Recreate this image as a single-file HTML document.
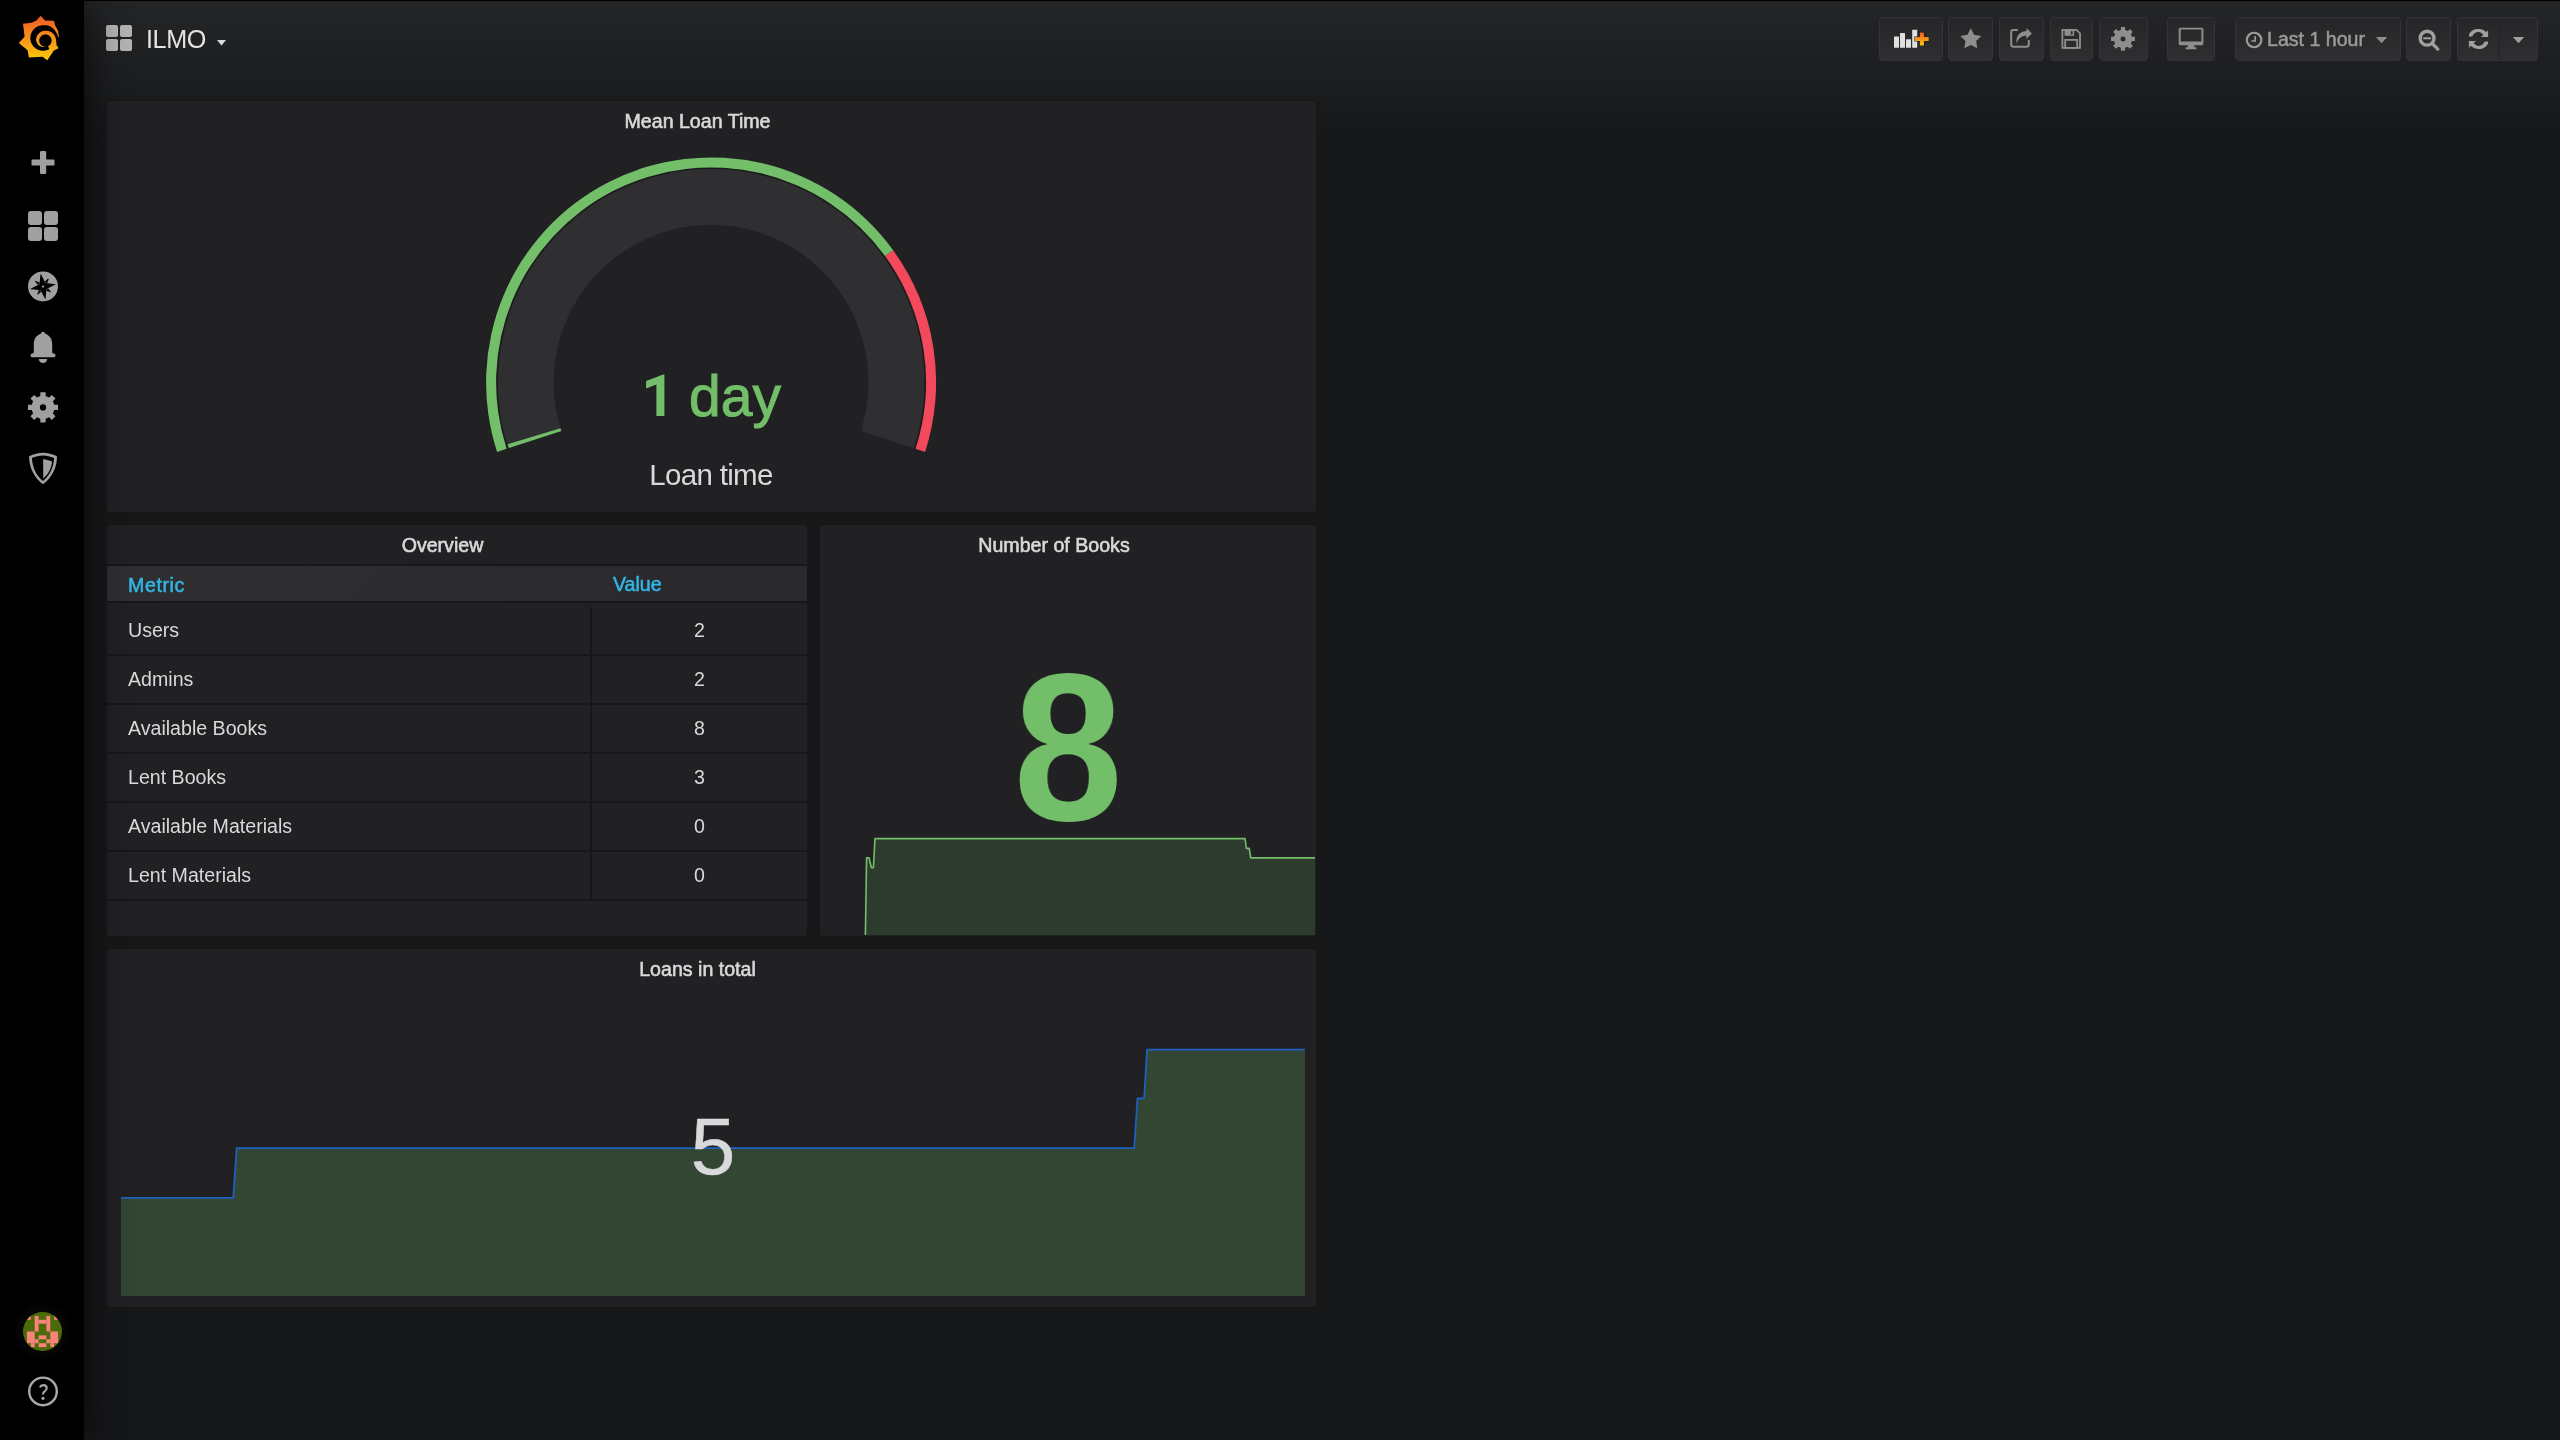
<!DOCTYPE html>
<html><head><meta charset="utf-8">
<style>
*{box-sizing:border-box;margin:0;padding:0}
html,body{width:2560px;height:1440px;overflow:hidden}
body{background:linear-gradient(180deg,#222426 14px,#161719 140px);font-family:"Liberation Sans",sans-serif;color:#d8d9da;position:relative}
.abs{position:absolute}
div,svg{will-change:transform}
#topline{left:0;top:0;width:2560px;height:1px;background:#000;z-index:5}
#side{left:0;top:0;width:84px;height:1440px;background:#000;box-shadow:0 0 40px rgba(0,0,0,0.75);z-index:4}
.panel{position:absolute;background:#212124;border:1px solid #171717;border-radius:4px;overflow:hidden}
.ptitle{position:absolute;top:0;height:40px;line-height:40px;font-size:19.6px;color:#d8d9da;text-align:center;white-space:nowrap;-webkit-text-stroke:0.6px #d8d9da}
.btn{position:absolute;top:17px;height:44px;border-radius:4px;background:linear-gradient(180deg,#262628,#2f2f32);border:1px solid #333336}
</style></head><body>
<div id="topline" class="abs"></div>
<div id="side" class="abs">
<svg class="abs" style="left:0;top:0" width="84" height="1440" viewBox="0 0 84 1440">
 <defs><linearGradient id="lg" gradientUnits="userSpaceOnUse" x1="0" y1="16" x2="0" y2="60"><stop offset="0" stop-color="#f05a28"/><stop offset="1" stop-color="#fbca0a"/></linearGradient>
 <radialGradient id="avg" cx="0.5" cy="0.5" r="0.5"><stop offset="0.5" stop-color="#0a0a0a"/><stop offset="1" stop-color="#000"/></radialGradient></defs>
 <g>
 <path fill="url(#lg)" d="M40.6 15.8 L45 20.6 L53.9 20.8 L55.2 25.5 L57.9 30.5 L59 36.8 L57 38.5 L56.3 44.5 L58.6 48.2 L53.9 50.4 L47.3 60.2 L42.5 56.8 L28.9 57.6 L27.6 50.2 L18.8 42.9 L24.6 36.8 L23 23.8 L31.6 22.8 L36.4 20.4 Z"/>
 <path fill="#000" d="M30.30 38.00 L30.35 36.89 L30.49 35.79 L30.73 34.71 L31.07 33.66 L31.49 32.63 L32.00 31.65 L32.60 30.72 L33.27 29.84 L34.02 29.02 L34.84 28.27 L35.72 27.60 L36.65 27.00 L37.63 26.49 L38.66 26.07 L39.71 25.73 L40.79 25.49 L41.89 25.35 L43.00 25.30 L44.12 25.21 L45.25 25.22 L46.39 25.33 L47.53 25.55 L48.66 25.87 L49.76 26.29 L50.84 26.81 L51.87 27.43 L52.83 28.17 L53.72 29.00 L54.55 29.91 L55.30 30.90 L55.96 31.96 L56.53 33.07 L57.17 34.20 L57.72 35.40 L58.17 36.67 L58.50 38.00 L58.19 39.33 L57.77 40.60 L57.25 41.82 L56.63 42.96 L55.85 43.99 L55.00 44.93 L54.09 45.77 L53.13 46.50 L52.12 47.12 L51.28 47.86 L50.37 48.53 L49.42 49.11 L48.41 49.61 L47.37 50.02 L46.30 50.33 L45.21 50.55 L44.11 50.67 L43.00 50.70 L41.89 50.65 L40.79 50.51 L39.71 50.27 L38.66 49.93 L37.63 49.51 L36.65 49.00 L35.72 48.40 L34.84 47.73 L34.02 46.98 L33.27 46.16 L32.60 45.28 L32.00 44.35 L31.49 43.37 L31.07 42.34 L30.73 41.29 L30.49 40.21 L30.35 39.11 L30.30 38.00 Z"/>
 <path fill="url(#lg)" d="M46.65 46.26 L46.02 46.55 L45.35 46.78 L44.64 46.94 L43.90 47.02 L43.13 47.02 L42.35 46.94 L41.57 46.78 L40.79 46.52 L40.02 46.18 L39.33 45.70 L38.67 45.15 L38.07 44.52 L37.53 43.83 L37.05 43.07 L36.65 42.26 L36.33 41.40 L36.10 40.49 L36.01 39.56 L36.11 38.63 L36.29 37.71 L36.57 36.82 L36.94 35.96 L37.39 35.14 L37.92 34.38 L38.52 33.67 L39.19 33.03 L39.92 32.46 L40.71 31.97 L41.54 31.56 L42.40 31.23 L43.29 31.00 L44.20 30.85 L45.12 30.80 L46.04 30.75 L46.98 30.77 L47.92 30.88 L48.85 31.10 L49.77 31.41 L50.66 31.82 L51.51 32.32 L52.32 32.91 L53.06 33.59 L53.75 34.35 L54.35 35.18 L54.88 36.08 L55.31 37.03 L55.65 38.04 L55.89 39.09 L56.06 40.16 L56.22 41.27 L56.27 42.42 L56.20 43.60 L56.00 44.78 L55.67 45.96 L55.20 47.12 L54.61 48.24 L53.89 49.32 L53.05 50.34 L52.08 51.28 L51.01 52.14 L48.02 46.22 L48.57 45.93 L49.09 45.58 L49.58 45.18 L50.02 44.74 L50.41 44.25 L50.75 43.73 L51.04 43.17 L51.27 42.59 L51.44 41.99 L51.55 41.37 L51.60 40.75 L51.58 40.12 L51.50 39.50 L51.36 38.89 L51.16 38.30 L50.90 37.73 L50.58 37.19 L50.21 36.69 L49.79 36.22 L49.33 35.80 L48.83 35.43 L48.29 35.11 L47.72 34.85 L47.13 34.65 L46.52 34.50 L45.90 34.42 L45.28 34.40 L44.65 34.45 L44.04 34.55 L43.43 34.72 L42.85 34.95 L42.29 35.23 L41.77 35.57 L41.28 35.97 L40.83 36.40 L40.44 36.89 L40.09 37.41 L39.79 37.96 L39.55 38.54 L39.38 39.14 L39.26 39.75 L39.20 40.37 L39.21 41.00 L39.28 41.62 L39.42 42.23 L39.61 42.83 L39.87 43.40 L40.18 43.94 L40.54 44.45 L40.95 44.92 L41.41 45.35 L41.91 45.72 L42.44 46.05 L43.01 46.32 L43.60 46.53 L44.20 46.68 L44.82 46.77 L45.45 46.80 L46.07 46.76 L46.69 46.66 Z"/>
 </g>
 <g fill="#a0a0a0">
 <!-- plus -->
 <rect x="40" y="151" width="6.2" height="23" rx="1.2"/>
 <rect x="31.5" y="159.4" width="23" height="6.2" rx="1.2"/>
 <!-- dashboards -->
 <rect x="28" y="211" width="14" height="14" rx="3"/><rect x="44" y="211" width="14" height="14" rx="3"/>
 <rect x="28" y="227" width="14" height="14" rx="3"/><rect x="44" y="227" width="14" height="14" rx="3"/>
 <!-- compass -->
 <circle cx="43" cy="286.4" r="15"/>
 <!-- bell -->
 <path d="M43 331.7 C44.3 331.7 45 332.6 45 333.8 C49.5 335 52.2 339 52.2 344 L52.2 352.2 C52.2 353 53 353.3 54 353.6 C55 354 55.5 354.8 55.5 355.5 C55.5 356.6 54.7 357.3 53.5 357.3 L32.5 357.3 C31.3 357.3 30.6 356.6 30.6 355.5 C30.6 354.8 31.1 354 32 353.6 C33 353.3 33.8 353 33.8 352.2 L33.8 344 C33.8 339 36.5 335 41 333.8 C41 332.6 41.7 331.7 43 331.7 Z"/>
 <path d="M38.8 359 L47.2 359 C47 361.5 45.2 363 43 363 C40.8 363 39 361.5 38.8 359 Z"/>
 <!-- gear -->
 <path fill-rule="evenodd" d="M40.29 396.12 L40.37 392.33 L45.63 392.33 L45.71 396.12 L49.06 397.51 L51.80 394.88 L55.52 398.60 L52.89 401.34 L54.28 404.69 L58.07 404.77 L58.07 410.03 L54.28 410.11 L52.89 413.46 L55.52 416.20 L51.80 419.92 L49.06 417.29 L45.71 418.68 L45.63 422.47 L40.37 422.47 L40.29 418.68 L36.94 417.29 L34.20 419.92 L30.48 416.20 L33.11 413.46 L31.72 410.11 L27.93 410.03 L27.93 404.77 L31.72 404.69 L33.11 401.34 L30.48 398.60 L34.20 394.88 L36.94 397.51 Z M43 404.29999999999995 A3.1 3.1 0 1 0 43 410.5 A3.1 3.1 0 1 0 43 404.29999999999995 Z"/>
 <!-- shield -->
 <path fill-rule="evenodd" d="M43 452.7 C47.5 452.7 52.5 454 57 456.2 C57 467 52.5 477 43 484.3 C33.5 477 29.1 467 29.1 456.2 C33.5 454 38.5 452.7 43 452.7 Z M43 455.5 C39.3 455.5 35.5 456.4 31.9 458 C32.3 467 36 475.5 43 481 C50 475.5 53.7 467 54.1 458 C50.5 456.4 46.7 455.5 43 455.5 Z"/>
 <path d="M43.2 459 L52 461.3 C51.6 468.5 48.2 474.5 43.2 478.5 Z"/>
 <!-- help -->
 <circle cx="43" cy="1391.4" r="13.8" fill="none" stroke="#a9a9a9" stroke-width="2.4"/>
 </g>
 <g fill="#000">
  <path d="M40.59 273.62 L45.44 283.06 L55.98 284.19 L46.54 289.04 L45.41 299.58 L40.56 290.14 L30.02 289.01 L39.46 284.16 Z"/>
  <path d="M48.27 278.94 L46.85 282.94 L45.04 281.69 Z M50.66 291.87 L46.66 290.45 L47.91 288.64 Z M37.73 294.26 L39.15 290.26 L40.96 291.51 Z M35.34 281.33 L39.34 282.75 L38.09 284.56 Z" stroke="#000" stroke-width="0.8" stroke-linejoin="round"/>
  <circle cx="43" cy="286.6" r="1.1" fill="#a0a0a0"/>
 </g>
 <path d="M39.9 1387.3 C40.6 1385.7 41.7 1385.1 43.1 1385.1 C45.3 1385.1 46.7 1386.5 46.7 1388.3 C46.7 1390 45.6 1390.8 44.4 1391.6 C43.4 1392.3 43 1392.9 43 1394.4" fill="none" stroke="#a9a9a9" stroke-width="2.1" stroke-linecap="butt"/>
 <circle cx="43" cy="1398.3" r="1.6" fill="#a9a9a9"/>
 <!-- avatar -->
 <circle cx="42.5" cy="1331.5" r="30" fill="url(#avg)"/>
 <clipPath id="avc"><circle cx="42.5" cy="1331.5" r="19.5"/></clipPath>
 <g clip-path="url(#avc)">
  <rect x="22" y="1311" width="41" height="41" fill="#4b6a08"/>
  <g fill="#f8837a" transform="translate(26.9,1315.9) scale(3.9)">
   <rect x="0" y="0" width="1" height="1"/><rect x="2" y="0" width="1" height="4"/><rect x="5" y="0" width="1" height="4"/><rect x="7" y="0" width="1" height="1"/>
   <rect x="3" y="1" width="2" height="1"/>
   <rect x="0" y="4" width="2" height="3"/><rect x="6" y="4" width="2" height="3"/>
   <rect x="3" y="5" width="2" height="1"/><rect x="2" y="6" width="1" height="1"/><rect x="5" y="6" width="1" height="1"/>
   <rect x="1" y="7" width="1" height="1"/><rect x="3" y="7" width="2" height="1"/><rect x="6" y="7" width="1" height="1"/>
  </g>
 </g>
</svg>
</div>

<!-- header -->
<svg class="abs" style="left:106px;top:25px" width="26" height="26" viewBox="0 0 26 26"><g fill="#b3b3b3"><rect x="0" y="0" width="12" height="12" rx="2"/><rect x="14" y="0" width="12" height="12" rx="2"/><rect x="0" y="14" width="12" height="12" rx="2"/><rect x="14" y="14" width="12" height="12" rx="2"/></g></svg>
<div class="abs" style="left:146px;top:21px;font-size:25.2px;line-height:36px;color:#e3e3e3;white-space:nowrap;letter-spacing:-0.4px">ILMO</div>
<svg class="abs" style="left:217px;top:40px" width="10" height="6" viewBox="0 0 10 6"><path d="M0 0 L9 0 L4.5 5.5 Z" fill="#d8d9da"/></svg>

<!-- toolbar -->
<svg class="abs" style="left:1860px;top:0" width="700" height="80" viewBox="1860 0 700 80">
 <defs>
  <linearGradient id="bg" x1="0" y1="0" x2="0" y2="1"><stop offset="0" stop-color="#262628"/><stop offset="1" stop-color="#2f2f32"/></linearGradient>
  <linearGradient id="og" x1="0" y1="0" x2="0" y2="1"><stop offset="0" stop-color="#f05a28"/><stop offset="1" stop-color="#fbca0a"/></linearGradient>
 </defs>
 <g fill="url(#bg)" stroke="#343437" stroke-width="1">
  <rect x="1879.5" y="17.5" width="63" height="43" rx="3.5"/>
  <rect x="1948.5" y="17.5" width="44" height="43" rx="3.5"/>
  <rect x="1999.5" y="17.5" width="44" height="43" rx="3.5"/>
  <rect x="2050.5" y="17.5" width="42" height="43" rx="3.5"/>
  <rect x="2099.5" y="17.5" width="48" height="43" rx="3.5"/>
  <rect x="2167.5" y="17.5" width="47" height="43" rx="3.5"/>
  <rect x="2235.5" y="17.5" width="165" height="43" rx="3.5"/>
  <rect x="2406.5" y="17.5" width="44" height="43" rx="3.5"/>
  <rect x="2457.5" y="17.5" width="80" height="43" rx="3.5"/>
 </g>
 <line x1="2499" y1="18" x2="2499" y2="60" stroke="#242426" stroke-width="1"/>
 <!-- add panel icon -->
 <g fill="#e0e0e0">
  <rect x="1894" y="36.4" width="5" height="11.4" rx="0.5"/>
  <rect x="1900" y="32.9" width="5" height="14.9" rx="0.5"/>
  <rect x="1906" y="39.2" width="5" height="8.6" rx="0.5"/>
  <rect x="1912.2" y="29.8" width="5" height="18" rx="0.5"/>
 </g>
 <path d="M1919.9 32.4 L1923.9 32.4 L1923.9 37 L1928.7 37 L1928.7 41 L1923.9 41 L1923.9 45.5 L1919.9 45.5 L1919.9 41 L1915 41 L1915 37 L1919.9 37 Z" fill="url(#og)" stroke="#1a1a1a" stroke-width="1.2" paint-order="stroke"/>
 <g fill="#8e8e8e">
  <!-- star -->
  <path d="M1970.80 28.30 L1974.09 34.77 L1981.26 35.90 L1976.13 41.03 L1977.27 48.20 L1970.80 44.90 L1964.33 48.20 L1965.47 41.03 L1960.34 35.90 L1967.51 34.77 Z"/>
  <!-- gear -->
  <path fill-rule="evenodd" d="M2120.85 29.95 L2120.92 26.98 L2125.08 26.98 L2125.15 29.95 L2127.81 31.06 L2129.96 29.00 L2132.90 31.94 L2130.84 34.09 L2131.95 36.75 L2134.92 36.82 L2134.92 40.98 L2131.95 41.05 L2130.84 43.71 L2132.90 45.86 L2129.96 48.80 L2127.81 46.74 L2125.15 47.85 L2125.08 50.82 L2120.92 50.82 L2120.85 47.85 L2118.19 46.74 L2116.04 48.80 L2113.10 45.86 L2115.16 43.71 L2114.05 41.05 L2111.08 40.98 L2111.08 36.82 L2114.05 36.75 L2115.16 34.09 L2113.10 31.94 L2116.04 29.00 L2118.19 31.06 Z M2123 36.4 A2.5 2.5 0 1 0 2123 41.4 A2.5 2.5 0 1 0 2123 36.4 Z"/>
  <!-- monitor -->
  <path fill-rule="evenodd" d="M2180.5 27.7 L2201.6 27.7 C2202.6 27.7 2203.4 28.5 2203.4 29.5 L2203.4 43.5 C2203.4 44.5 2202.6 45.3 2201.6 45.3 L2194.2 45.3 L2194.2 47.3 L2196.5 47.3 L2196.5 49.3 L2185.6 49.3 L2185.6 47.3 L2187.9 47.3 L2187.9 45.3 L2180.5 45.3 C2179.5 45.3 2178.7 44.5 2178.7 43.5 L2178.7 29.5 C2178.7 28.5 2179.5 27.7 2180.5 27.7 Z M2180.7 29.6 L2180.7 41.4 L2201.4 41.4 L2201.4 29.6 Z"/>
  <!-- carets -->
  <path d="M2376 37 L2387.2 37 L2381.6 43.3 Z"/>
 </g>
 <g fill="#a0a0a0">
  <path d="M2512.9 37 L2524.2 37 L2518.55 43.3 Z"/>
 </g>
 <!-- share -->
 <path fill="none" stroke="#8e8e8e" stroke-width="2" d="M2017.8 30 L2013.3 30 C2012 30 2011.2 30.8 2011.2 32.1 L2011.2 44.6 C2011.2 45.9 2012 46.7 2013.3 46.7 L2026.7 46.7 C2028 46.7 2028.8 45.9 2028.8 44.6 L2028.8 40"/>
 <path fill="#8e8e8e" d="M2016.6 43.6 C2015.6 37.5 2018.8 31.3 2026.4 31 L2026.4 28 L2031.9 33.5 L2026.4 39 L2026.4 35.8 C2021.5 35.8 2018.3 38.3 2016.6 43.6 Z"/>
 <!-- save -->
 <g fill="none" stroke="#8e8e8e" stroke-width="1.8">
  <path d="M2062.4 29.8 L2076.5 29.8 L2080 33.3 L2080 47.9 L2062.4 47.9 Z"/>
  <rect x="2065.2" y="39.9" width="12" height="8"/>
 </g>
 <path fill="#8e8e8e" d="M2064.5 30 L2074.2 30 L2074.2 35.8 L2064.5 35.8 Z M2070.8 31.2 L2070.8 34.4 L2072.6 34.4 L2072.6 31.2 Z" fill-rule="evenodd"/>
 <!-- clock -->
 <circle cx="2254.1" cy="40" r="7.25" fill="none" stroke="#9a9a9a" stroke-width="2.2"/>
 <path d="M2255.2 36 L2255.2 41 L2251.4 41" fill="none" stroke="#9a9a9a" stroke-width="1.7"/>
 <!-- zoom -->
 <circle cx="2427.1" cy="38.2" r="6.9" fill="none" stroke="#a0a0a0" stroke-width="3.4"/>
 <rect x="2423.2" y="37.3" width="7.9" height="2" fill="#a0a0a0"/>
 <path d="M2433.2 44.5 L2437.8 49.1" stroke="#a0a0a0" stroke-width="3.3" stroke-linecap="round"/>
 <!-- refresh -->
 <g fill="#a0a0a0">
  <path d="M2469 34.5 C2470.5 31 2474 29 2478.5 29 C2481.6 29 2484.3 30.2 2486.2 32.2 L2488.1 30 L2488.1 36.9 L2481.1 36.9 L2483.3 34.7 C2482 33.4 2480.4 32 2478.5 32 C2475.6 32 2473.3 33.6 2472.3 36.4 L2468.9 36.4 Z"/>
  <path d="M2488 43.5 C2486.5 47 2483 49 2478.5 49 C2475.4 49 2472.7 47.8 2470.8 45.8 L2468.9 48 L2468.9 41.1 L2475.9 41.1 L2473.7 43.3 C2475 44.6 2476.6 46 2478.5 46 C2481.4 46 2483.7 44.4 2484.7 41.6 L2488.1 41.6 Z"/>
 </g>
</svg>
<div class="abs" style="left:2267px;top:27px;font-size:19.6px;line-height:24px;color:#9a9a9a;white-space:nowrap;-webkit-text-stroke:0.5px #9a9a9a">Last 1 hour</div>
<!-- panels -->
<svg class="abs" style="left:0;top:0;z-index:1" width="1320" height="1320" viewBox="0 0 1320 1320">
 <!-- gauge -->
 <path fill="#1c1c1e" d="M506.62 448.84 A215 215 0 1 1 915.58 448.84 L913.96 448.31 A213.3 213.3 0 1 0 508.24 448.31 Z"/>
 <path fill="#2f2f32" d="M508.24 448.31 A213.3 213.3 0 1 1 913.96 448.31 L860.80 431.04 A157.4 157.4 0 1 0 561.40 431.04 Z"/>
 <path fill="#73bf69" d="M497.11 451.93 A225 225 0 0 1 893.13 250.15 L885.04 256.03 A215 215 0 0 0 506.62 448.84 Z"/>
 <path fill="#f2495c" d="M893.13 250.15 A225 225 0 0 1 925.09 451.93 L915.58 448.84 A215 215 0 0 0 885.04 256.03 Z"/>
<path fill="#73bf69" d="M664.4 374.4 L664.4 416.1 L656.4 416.1 L656.4 384.6 L646.1 388.4 L646.1 380.9 L663.1 374.4 Z"/>
 <path fill="#73bf69" d="M508.91 448.10 A212.6 212.6 0 0 1 507.68 444.20 L560.50 428.16 A157.4 157.4 0 0 0 561.40 431.04 Z"/>
</svg>

<div class="panel" style="left:106px;top:100px;width:1211px;height:413px">
  <div class="ptitle" style="left:0;width:1181px">Mean Loan Time</div>
</div>
<div class="abs" style="left:688.8px;top:367.6px;font-size:57px;line-height:57px;color:#73bf69;-webkit-text-stroke:1px #73bf69;white-space:nowrap;z-index:2">day</div>
<div class="abs" style="left:511px;top:457.5px;width:400px;text-align:center;font-size:29.5px;line-height:34px;color:#d8d9da;letter-spacing:-0.7px;white-space:nowrap;z-index:2">Loan time</div>
<div class="panel" style="left:106px;top:524px;width:702px;height:413px">
  <div class="ptitle" style="left:0;width:671px;top:0px">Overview</div>
</div>
<div class="panel" style="left:819px;top:524px;width:498px;height:413px">
  <div class="ptitle" style="left:0;width:468px;top:0px">Number of Books</div>
</div>
<div class="panel" style="left:106px;top:948px;width:1211px;height:360px">
  <div class="ptitle" style="left:0;width:1181px;top:0px">Loans in total</div>
</div>
<!-- table -->
<div class="abs" style="left:107px;top:564px;width:700px;height:2px;background:#161719;z-index:2"></div>
<div class="abs" style="left:107px;top:566px;width:700px;height:35px;background:linear-gradient(135deg,#2f2f32 0%,#2b2b2e 60%,#2a2a2d 100%);z-index:2"></div>
<div class="abs" style="left:107px;top:601px;width:700px;height:2px;background:#161719;z-index:2"></div>
<div class="abs" style="left:127.5px;top:572.5px;font-size:19.6px;line-height:24px;color:#33b5e5;-webkit-text-stroke:0.55px #33b5e5;letter-spacing:0.6px;white-space:nowrap;z-index:3">Metric</div>
<div class="abs" style="left:613px;top:572px;font-size:19.6px;line-height:24px;color:#33b5e5;-webkit-text-stroke:0.55px #33b5e5;white-space:nowrap;z-index:3">Value</div>
<div class="abs" style="left:590px;top:607px;width:2px;height:294px;background:#161719;z-index:2"></div>
<div class="abs" style="left:107px;top:654px;width:700px;height:2px;background:#161719;z-index:2"></div>
<div class="abs" style="left:128px;top:618.3px;font-size:19.6px;line-height:24px;color:#d8d9da;white-space:nowrap;z-index:3">Users</div>
<div class="abs" style="left:592px;top:618.3px;width:215px;text-align:center;font-size:19.6px;line-height:24px;color:#d8d9da;white-space:nowrap;z-index:3">2</div>
<div class="abs" style="left:107px;top:703px;width:700px;height:2px;background:#161719;z-index:2"></div>
<div class="abs" style="left:128px;top:667.3px;font-size:19.6px;line-height:24px;color:#d8d9da;white-space:nowrap;z-index:3">Admins</div>
<div class="abs" style="left:592px;top:667.3px;width:215px;text-align:center;font-size:19.6px;line-height:24px;color:#d8d9da;white-space:nowrap;z-index:3">2</div>
<div class="abs" style="left:107px;top:752px;width:700px;height:2px;background:#161719;z-index:2"></div>
<div class="abs" style="left:128px;top:716.3px;font-size:19.6px;line-height:24px;color:#d8d9da;white-space:nowrap;z-index:3">Available Books</div>
<div class="abs" style="left:592px;top:716.3px;width:215px;text-align:center;font-size:19.6px;line-height:24px;color:#d8d9da;white-space:nowrap;z-index:3">8</div>
<div class="abs" style="left:107px;top:801px;width:700px;height:2px;background:#161719;z-index:2"></div>
<div class="abs" style="left:128px;top:765.3px;font-size:19.6px;line-height:24px;color:#d8d9da;white-space:nowrap;z-index:3">Lent Books</div>
<div class="abs" style="left:592px;top:765.3px;width:215px;text-align:center;font-size:19.6px;line-height:24px;color:#d8d9da;white-space:nowrap;z-index:3">3</div>
<div class="abs" style="left:107px;top:850px;width:700px;height:2px;background:#161719;z-index:2"></div>
<div class="abs" style="left:128px;top:814.3px;font-size:19.6px;line-height:24px;color:#d8d9da;white-space:nowrap;z-index:3">Available Materials</div>
<div class="abs" style="left:592px;top:814.3px;width:215px;text-align:center;font-size:19.6px;line-height:24px;color:#d8d9da;white-space:nowrap;z-index:3">0</div>
<div class="abs" style="left:107px;top:899px;width:700px;height:2px;background:#161719;z-index:2"></div>
<div class="abs" style="left:128px;top:863.3px;font-size:19.6px;line-height:24px;color:#d8d9da;white-space:nowrap;z-index:3">Lent Materials</div>
<div class="abs" style="left:592px;top:863.3px;width:215px;text-align:center;font-size:19.6px;line-height:24px;color:#d8d9da;white-space:nowrap;z-index:3">0</div>
<!-- number of books -->
<svg class="abs" style="left:820px;top:525px;z-index:2" width="496" height="412" viewBox="820 525 496 412">
 <path fill="#2d3b2e" d="M865.4 935 L866.6 857.7 L869 857.7 L871.4 867.7 L873.4 867.7 L875 838.6 L1245.1 838.6 L1246.35 848.4 L1249.2 848.4 L1250.75 857.9 L1315 857.9 L1315 935 Z"/>
 <path fill="none" stroke="#73bf69" stroke-width="1.6" stroke-linejoin="round" d="M865.4 935 L866.6 857.7 L869 857.7 L871.4 867.7 L873.4 867.7 L875 838.6 L1245.1 838.6 L1246.35 848.4 L1249.2 848.4 L1250.75 857.9 L1315 857.9"/>
</svg>
<div class="abs" style="left:868px;top:627.5px;width:400px;text-align:center;font-size:209px;line-height:240px;font-weight:700;color:#73bf69;white-space:nowrap;z-index:3;transform:scaleX(0.94)">8</div>
<!-- loans in total -->
<svg class="abs" style="left:107px;top:949px;z-index:2" width="1209" height="358" viewBox="107 949 1209 358">
 <path fill="#334633" d="M121 1296 L121 1197.8 L233.3 1197.8 L236.7 1148.2 L1134.2 1148.2 L1137.5 1098.3 L1144.2 1098.3 L1147.1 1049.6 L1305 1049.6 L1305 1296 Z"/>
 <path fill="none" stroke="#1f5fc0" stroke-width="1.8" stroke-linejoin="round" d="M121 1197.8 L233.3 1197.8 L236.7 1148.2 L1134.2 1148.2 L1137.5 1098.3 L1144.2 1098.3 L1147.1 1049.6 L1305 1049.6"/>
</svg>
<div class="abs" style="left:512.5px;top:1102px;width:400px;text-align:center;font-size:80px;line-height:90px;color:#d8d9da;-webkit-text-stroke:0.5px #d8d9da;white-space:nowrap;z-index:3">5</div>
</body></html>
